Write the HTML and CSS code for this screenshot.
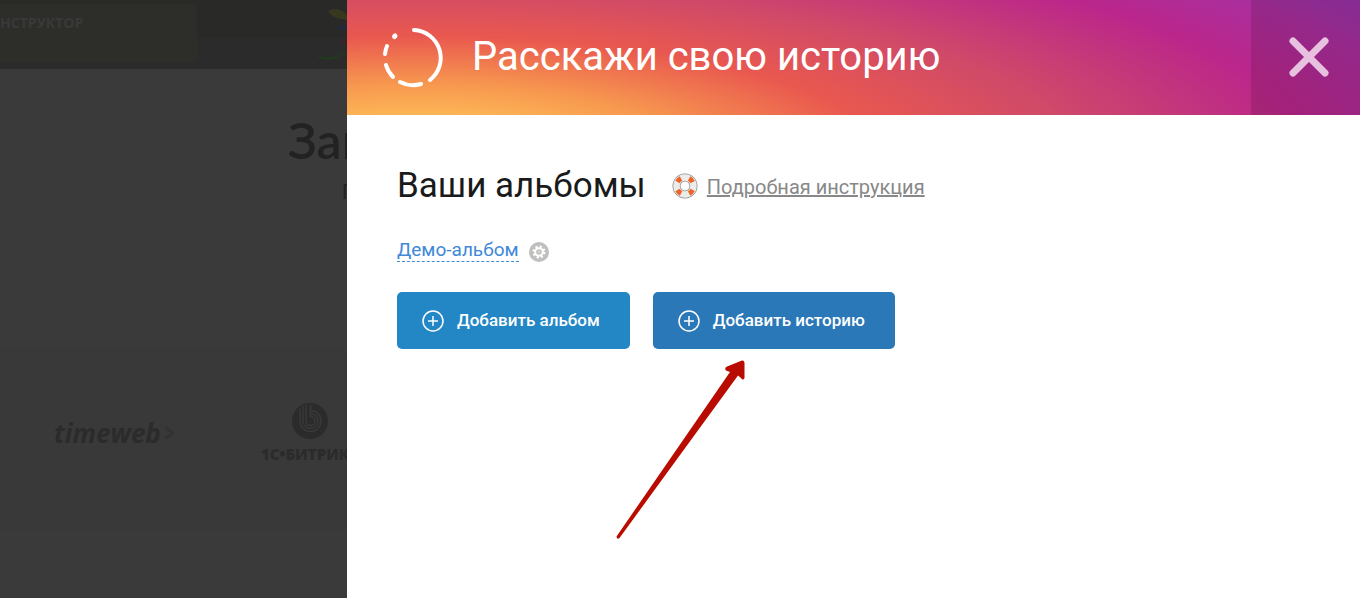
FILE: index.html
```html
<!DOCTYPE html>
<html lang="ru">
<head>
  <meta charset="UTF-8">
  <meta name="viewport" content="width=device-width, initial-scale=1.0">
  <title>Расскажи свою историю</title>
  <link rel="stylesheet" href="styles.css">
</head>
<body>
  <div class="site">
    <div class="site-header">
      <div class="site-menu">НСТРУКТОР</div>
      <svg class="site-logo" width="34" height="56" viewBox="0 0 34 56">
        <path d="M15 7c7-4 15-2 19 5v4c-7-1-16-3-19-9z" fill="#38371f"/>
        <path d="M21 19c4 4 9 4 13 1v5c-6 3-12 0-13-6z" fill="#25283a"/>
        <path d="M24 40c3-3 7-3 10-5v5c-4-2-7-1-10 0z" fill="#3a2325"/>
        <path d="M0 49c10 6 23 6 34-4-8 13-25 15-34 4z" fill="#24381f"/>
      </svg>
    </div>
    <div class="site-hero">
      <h2>Заг</h2>
      <p>П</p>
    </div>
    <div class="partners">
      <div class="timeweb">timeweb<svg width="12" height="14" viewBox="0 0 12 14" fill="none" stroke="#323232" stroke-width="3"><path d="M1 1l9 6-9 6"/></svg></div>
      <div class="bitrix">
        <svg width="36" height="36" viewBox="0 0 36 36" fill="none">
          <circle cx="18" cy="18" r="18" fill="#2b2b2b"/>
          <g stroke="#393939" stroke-width="1.5">
            <path d="M8 5v13a10.500 10.500 0 1 0 10.500-10.500"/>
            <path d="M11 3v15a7.500 7.500 0 1 0 7.500-7.500"/>
            <path d="M14 2v16a4.500 4.500 0 1 0 4.500-4.500V2"/>
          </g>
        </svg>
        <span>1С•БИТРИКС</span>
      </div>
    </div>
  </div>

  <div class="panel">
    <div class="panel-header">
      <svg class="story-icon" width="60" height="60" viewBox="0 0 60 60" fill="none" stroke="#fff" stroke-width="4" stroke-linecap="round">
        <path d="M31 2A28 28 0 0 1 47 52"/>
        <path d="M38 56a28 28 0 0 1-21-2"/>
        <path d="M10 49A28 28 0 0 1 3 37"/>
        <path d="M2 26a28 28 0 0 1 2-8"/>
        <path d="M11.500 8.500l.5-.5" stroke-width="5"/>
      </svg>
      <h1>Расскажи свою историю</h1>
      <button class="close" aria-label="Закрыть">
        <svg width="42" height="42" viewBox="0 0 42 42" stroke="#e8c0e0" stroke-width="7" stroke-linecap="round"><path d="M5 4l32 32M37 4L5 36"/></svg>
      </button>
    </div>

    <div class="panel-body">
      <div class="title-row">
        <h2>Ваши альбомы</h2>
        <svg class="help-icon" width="26" height="26" viewBox="0 0 26 26" fill="none">
          <circle cx="13" cy="13" r="8.500" stroke="#8f8a87" stroke-width="8"/>
          <circle cx="13" cy="13" r="8.500" stroke="#ececec" stroke-width="6.500"/>
          <circle cx="13" cy="13" r="8.500" stroke="#ee6428" stroke-width="5" stroke-dasharray="5 8.350" stroke-dashoffset="-4"/>
        </svg>
        <a class="help-link" href="#">Подробная инструкция</a>
      </div>

      <div class="album-row">
        <a class="album-link" href="#">Демо-альбом</a>
        <button class="settings" aria-label="Настройки">
          <svg width="20" height="20" viewBox="0 0 20 20" fill="none">
            <circle cx="10" cy="10" r="10" fill="#bfbfbd"/>
            <circle cx="10" cy="10" r="5" stroke="#fff" stroke-width="3" stroke-dasharray="2 1.927"/>
            <circle cx="10" cy="10" r="3.800" stroke="#fff" stroke-width="2"/>
            <circle cx="10" cy="10" r="1.200" fill="#d8d8d6"/>
          </svg>
        </button>
      </div>

      <div class="buttons">
        <button class="btn">
          <svg width="22" height="22" viewBox="0 0 22 22" fill="none" stroke="#fff" stroke-width="1.5"><circle cx="11" cy="11" r="10"/><path d="M11 6v10M6 11h10"/></svg>
          <span>Добавить альбом</span>
        </button>
        <button class="btn btn-story">
          <svg width="22" height="22" viewBox="0 0 22 22" fill="none" stroke="#fff" stroke-width="1.5"><circle cx="11" cy="11" r="10"/><path d="M11 6v10M6 11h10"/></svg>
          <span>Добавить историю</span>
          <svg class="arrow" width="132" height="182" viewBox="0 0 132 182"><path d="M1.500 176.500L115 12L111 10.500Q109 8 112 6.500L127 .500Q129.500 0 129.500 3V18Q128 21 126 18L123 15.500L4.500 178Q2 180 1.500 176.500z" fill="#b90c00"/></svg>
        </button>
      </div>
    </div>
  </div>
</body>
</html>
```
FILE: styles.css
```css
* {
  box-sizing: border-box;
}

body {
  margin: 0;
  min-height: 100vh;
  display: grid;
  grid-template-columns: 347px 1fr;
  font-family: Roboto, sans-serif;
  background: #fff;
}

h1, h2, p {
  margin: 0;
  font-weight: 400;
}

button {
  border: 0;
  padding: 0;
  background: none;
  font-family: inherit;
  cursor: pointer;
}

/* dimmed page under the panel */
.site {
  overflow: hidden;
  background: #3a3a3a;
  white-space: nowrap;
}

.site-header {
  height: 69px;
  padding-top: 4px;
  display: flex;
  justify-content: space-between;
  background: linear-gradient(#292927 38px, #2b2b2b 38px);
}

.site-menu {
  width: 197px;
  height: 58px;
  padding-top: 9px;
  border-radius: 0 4px 4px 0;
  background: #2d2d2a;
  color: #393939;
  font: 700 14px/20px "Open Sans", sans-serif;
}

.site-hero {
  height: 279px;
  padding-top: 41px;
  color: #222;
}

.site-hero h2 {
  margin-left: 288px;
  font: 600 50px/60px Lato, sans-serif;
}

.site-hero p {
  margin: 10px 0 0 342px;
  font-size: 20px;
  line-height: 24px;
}

.partners {
  height: 183px;
  padding: 55px 0 0 54px;
  display: flex;
  gap: 86px;
  background: #393939;
  color: #2b2b2b;
}

.timeweb {
  width: 121px;
  display: flex;
  flex: none;
  align-items: center;
  gap: 3px;
  height: 60px;
  font: italic 700 26px/60px "Open Sans", sans-serif;
}

.bitrix {
  flex: none;
  display: flex;
  flex-direction: column;
  align-items: center;
  font: 800 15px/20px "Open Sans", sans-serif;
}

.bitrix span {
  margin-top: 5px;
}

.panel-header {
  height: 115px;
  padding-left: 36px;
  display: flex;
  align-items: center;
  background: radial-gradient(ellipse 118% 300px at 7% 150px, #fdb556 12%, #f7984f 22%, #e9584f 38%, #d04a68 54%, #ba268b 74%, #a92f9f 86%, #8838b5 100%);
  color: #fff;
}

.panel-header h1 {
  flex: 1;
  margin-left: 29px;
  padding-bottom: 2px;
  font-size: 40px;
  line-height: 46px;
}

.close {
  width: 109px;
  height: 100%;
  padding-left: 6px;
  display: flex;
  align-items: center;
  justify-content: center;
  background: rgba(0, 0, 0, 0.12);
}

.panel-body {
  padding: 50px;
}

.title-row {
  display: flex;
  align-items: center;
}

.title-row h2 {
  font-size: 35px;
  line-height: 42px;
  color: #1a1a1a;
}

.help-icon {
  margin-left: 26px;
}

.help-link {
  margin-left: 9px;
  padding-top: 2px;
  font-size: 20px;
  line-height: 24px;
  color: #888;
}

.album-row {
  margin-top: 32px;
  display: flex;
  align-items: flex-end;
  gap: 10px;
}

.album-link {
  font-size: 19px;
  line-height: 22px;
  color: #4088d8;
  text-decoration: none;
  border-bottom: 1px dashed #4088d8;
}

.settings {
  height: 20px;
}

.buttons {
  margin-top: 30px;
  display: flex;
  gap: 23px;
}

.btn {
  position: relative;
  height: 57px;
  padding: 0 30px 0 25px;
  display: flex;
  align-items: center;
  gap: 13px;
  border-radius: 5px;
  background: #2387c6;
  color: #fff;
  font-size: 17px;
  font-weight: 500;
}

.btn span {
  padding-bottom: 2px;
}

.btn-story {
  background: #2a78b8;
}

.arrow {
  position: absolute;
  top: 68px;
  left: -38px;
  pointer-events: none;
}
```
